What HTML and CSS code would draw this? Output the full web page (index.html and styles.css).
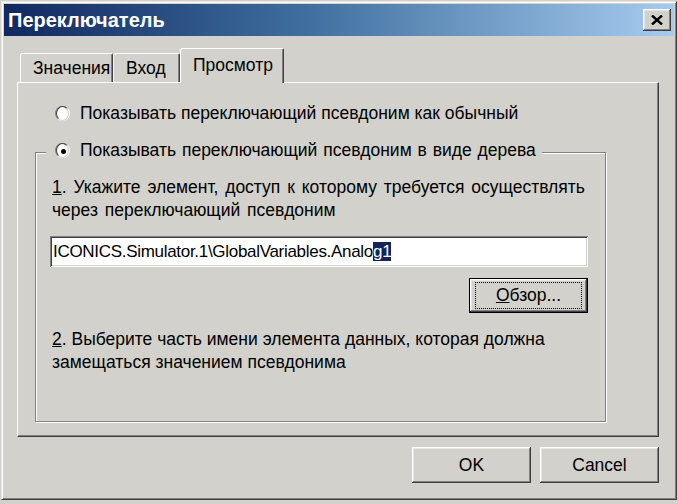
FILE: index.html
```html
<!DOCTYPE html>
<html lang="ru">
<head>
    <meta charset="UTF-8" />
    <title>Переключатель</title>
    <link rel="stylesheet" href="styles.css">
</head>
<body>
    <div class="window">
        <div class="titlebar">
            <span class="title">Переключатель</span>
            <button class="close" type="button">
                <svg width="12" height="10" viewBox="0 0 12 10">
                    <path d="M1 0.5 L11 9.5 M11 0.5 L1 9.5" stroke="#000" stroke-width="2.4" fill="none" />
                </svg>
            </button>
        </div>
        <div class="body">
            <div class="tabs">
                <div class="tab tab-first">Значения</div>
                <div class="tab tab-second">Вход</div>
                <div class="tab tab-active">Просмотр</div>
            </div>
            <div class="panel">
                <div class="option">
                    <span class="radio"></span>
                    <span>Показывать переключающий псевдоним как обычный</span>
                </div>
                <fieldset class="group">
                    <legend class="legend">
                        <span class="option">
                            <span class="radio checked"></span>
                            <span>Показывать переключающий псевдоним в виде дерева</span>
                        </span>
                    </legend>
                    <p class="hint hint-first"><u>1</u>. Укажите элемент, доступ к которому требуется осуществлять<br>через переключающий псевдоним</p>
                    <div class="edit">ICONICS.Simulator.1\GlobalVariables.Analo<span class="sel">g1</span></div>
                    <div class="browse-row">
                        <button class="btn btn-default" type="button"><span class="focus"><u>О</u>бзор...</span></button>
                    </div>
                    <p class="hint hint-second"><u>2</u>. Выберите часть имени элемента данных, которая должна<br>замещаться значением псевдонима</p>
                </fieldset>
            </div>
            <div class="buttons">
                <button class="btn" type="button">OK</button>
                <button class="btn" type="button">Cancel</button>
            </div>
        </div>
    </div>
</body>
</html>
```

FILE: styles.css
```css
* {
    box-sizing: border-box;
}

body {
    margin: 0;
    background-color: #d2d1cc;
    color: #000;
    font-family: "Liberation Sans", Arial, sans-serif;
    font-size: 17.5px;
}

.window {
    margin: 1px;
    width: 676px;
    height: 499px;
    padding: 2px;
    border: 1px solid;
    border-color: #e6e5e1 #404040 #404040 #e6e5e1;
    box-shadow: inset 1px 1px #fff, inset -1px -1px #808080;
    display: flex;
    flex-direction: column;
}

.titlebar {
    height: 32px;
    padding: 0 3px 0 4px;
    background: linear-gradient(90deg, #112860 0%, #3f6f9f 45%, #a6cbef 100%);
    display: flex;
    align-items: center;
    justify-content: space-between;
}

.title {
    color: #fff;
    font-weight: bold;
    font-size: 20px;
}

.close {
    width: 28px;
    height: 22px;
    padding: 0;
    border: none;
    background-color: #d2d1cc;
    box-shadow: inset -1px -1px #404040, inset 1px 1px #fff, inset -2px -2px #808080, inset 2px 2px #e6e5e1;
    display: flex;
    align-items: center;
    justify-content: center;
}

.body {
    flex: 1;
    padding: 12px 15px 0 13px;
}

.tabs {
    height: 34px;
    padding-left: 3px;
    display: flex;
    align-items: flex-end;
    position: relative;
    z-index: 1;
}

.tab {
    height: 29px;
    padding-left: 12px;
    line-height: 28px;
    background-color: #d2d1cc;
    border-top: 1px solid #fff;
    border-left: 1px solid #fff;
    border-right: 1px solid #404040;
    border-radius: 3px 2px 0 0;
    box-shadow: inset -1px 0 #808080;
}

.tab-first {
    width: 93px;
}

.tab-second {
    width: 67px;
    border-left-color: #f4f4f2;
}

.tab-active {
    width: 104px;
    height: 35px;
    margin-bottom: -1px;
    line-height: 32px;
}

.panel {
    height: 355px;
    background-color: #d2d1cc;
    border: 1px solid;
    border-color: #fff #404040 #404040 #fff;
    box-shadow: inset -1px -1px #808080;
    display: flex;
    flex-direction: column;
}

.option {
    height: 24px;
    display: flex;
    align-items: center;
    white-space: nowrap;
}

.panel > .option {
    margin: 18px 0 0 37px;
}

.radio {
    width: 15px;
    height: 15px;
    margin-right: 10px;
    border-radius: 50%;
    border: 1px solid;
    border-color: #808080 #fff #fff #808080;
    display: flex;
    align-items: center;
    justify-content: center;
    flex-shrink: 0;
}

.radio::before {
    content: "";
    width: 13px;
    height: 13px;
    border-radius: 50%;
    border: 1px solid;
    border-color: #404040 #d2d1cc #d2d1cc #404040;
    background-color: #fff;
}

.radio.checked {
    position: relative;
}

.radio.checked::after {
    content: "";
    position: absolute;
    left: 5px;
    top: 5px;
    width: 5px;
    height: 5px;
    border-radius: 50%;
    background-color: #000;
}

.group {
    height: 284px;
    margin: 13px 52px 0 17px;
    padding: 0 14px;
    min-inline-size: 0;
    border: 1px solid #808080;
    box-shadow: inset 1px 1px #fff, 1px 1px #fff;
}

.legend {
    margin-left: -4px;
    padding: 0 6px 4px 9px;
    background-color: #d2d1cc;
}

.legend .option {
    word-spacing: 1px;
}

.hint {
    margin: 10px 0 0 2px;
    line-height: 23px;
    white-space: nowrap;
}

.hint-first {
    word-spacing: 2px;
}

.hint-second {
    margin-top: 15px;
}

.edit {
    width: 538px;
    height: 31px;
    margin-top: 14px;
    padding: 0 3px;
    background-color: #fff;
    font-size: 17px;
    letter-spacing: -0.3px;
    line-height: 31px;
    white-space: nowrap;
    box-shadow: inset 1px 1px #808080, inset -1px -1px #fff, inset 2px 2px #404040, inset -2px -2px #d2d1cc;
}

.sel {
    background-color: #14245a;
    color: #fff;
}

.browse-row {
    width: 538px;
    margin-top: 11px;
    display: flex;
    justify-content: flex-end;
}

.btn {
    width: 119px;
    height: 36px;
    padding: 0;
    border: none;
    background-color: #d2d1cc;
    color: #000;
    font-family: inherit;
    font-size: 17.5px;
    box-shadow: inset -1px -1px #404040, inset 1px 1px #fff, inset -2px -2px #808080, inset 2px 2px #e6e5e1;
}

.btn-default {
    height: 35px;
    padding: 3px 5px;
    border: 1px solid #000;
    display: flex;
}

.focus {
    flex: 1;
    border: 1px dotted #000;
    display: flex;
    align-items: center;
    justify-content: center;
}

.buttons {
    margin-top: 10px;
    display: flex;
    justify-content: flex-end;
    gap: 9px;
}
```
